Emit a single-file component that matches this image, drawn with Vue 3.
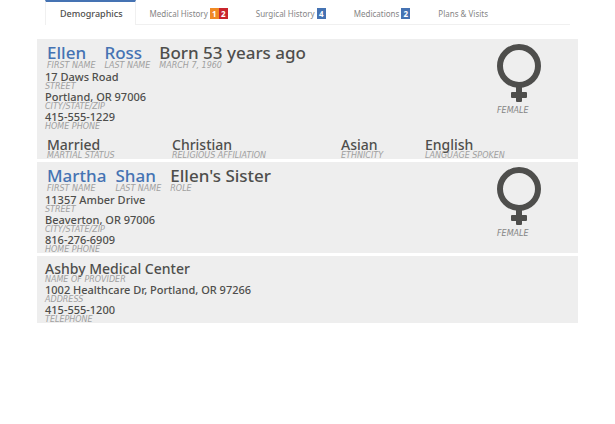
<script setup>
const tabs = [
  { label: 'Demographics', active: true, badges: [] },
  { label: 'Medical History', badges: [{ n: 1, tone: 'orange' }, { n: 2, tone: 'red' }] },
  { label: 'Surgical History', badges: [{ n: 4, tone: 'blue' }] },
  { label: 'Medications', badges: [{ n: 2, tone: 'blue' }] },
  { label: 'Plans & Visits', badges: [] }
]

const people = [
  {
    names: [
      { value: 'Ellen', label: 'First name', blue: true },
      { value: 'Ross', label: 'Last name', blue: true },
      { value: 'Born 53 years ago', label: 'March 7, 1960' }
    ],
    fields: [
      { value: '17 Daws Road', label: 'Street' },
      { value: 'Portland, OR 97006', label: 'City/State/Zip' },
      { value: '415-555-1229', label: 'Home phone' }
    ],
    facts: [
      { value: 'Married', label: 'Martial status' },
      { value: 'Christian', label: 'Religious affiliation' },
      { value: 'Asian', label: 'Ethnicity' },
      { value: 'English', label: 'Language spoken' }
    ]
  },
  {
    names: [
      { value: 'Martha', label: 'First name', blue: true },
      { value: 'Shan', label: 'Last name', blue: true },
      { value: "Ellen's Sister", label: 'Role' }
    ],
    fields: [
      { value: '11357 Amber Drive', label: 'Street' },
      { value: 'Beaverton, OR 97006', label: 'City/State/Zip' },
      { value: '816-276-6909', label: 'Home phone' }
    ],
    facts: []
  }
]

const provider = [
  { value: '1002 Healthcare Dr, Portland, OR 97266', label: 'Address' },
  { value: '415-555-1200', label: 'Telephone' }
]
</script>

<template>
  <div class="page">
    <nav class="tabs">
      <a v-for="t in tabs" :key="t.label" href="#" class="tab" :class="{ active: t.active }">
        <span>{{ t.label }}</span>
        <span v-if="t.badges.length" class="badges">
          <span v-for="b in t.badges" :key="b.n" class="badge" :class="b.tone">{{ b.n }}</span>
        </span>
      </a>
    </nav>

    <main class="panels">
      <section v-for="(p, i) in people" :key="i" class="panel">
        <div class="person">
          <div class="details">
            <div class="names">
              <div v-for="n in p.names" :key="n.label">
                <div class="name" :class="{ blue: n.blue }">{{ n.value }}</div>
                <div class="caption">{{ n.label }}</div>
              </div>
            </div>
            <div v-for="f in p.fields" :key="f.label">
              <div class="value">{{ f.value }}</div>
              <div class="caption">{{ f.label }}</div>
            </div>
          </div>
          <div class="gender">
            <svg class="symbol" viewBox="0 0 44 58" aria-hidden="true">
              <circle cx="22" cy="22" r="19" fill="none" stroke="#4e4e4c" stroke-width="6" />
              <path d="M19 43h6v5h4q1 0 1 1v4q0 1-1 1h-4v3q0 1-1 1h-4q-1 0-1-1v-3h-4q-1 0-1-1v-4q0-1 1-1h4z" fill="#4e4e4c" />
            </svg>
            <div class="caption">Female</div>
          </div>
        </div>
        <div v-if="p.facts.length" class="facts">
          <div v-for="f in p.facts" :key="f.label">
            <div class="fact">{{ f.value }}</div>
            <div class="caption">{{ f.label }}</div>
          </div>
        </div>
      </section>

      <section class="panel">
        <div>
          <div class="fact">Ashby Medical Center</div>
          <div class="caption">Name of provider</div>
        </div>
        <div v-for="f in provider" :key="f.label">
          <div class="value">{{ f.value }}</div>
          <div class="caption">{{ f.label }}</div>
        </div>
      </section>
    </main>
  </div>
</template>

<style>
body {
  background: #fff;
}
</style>

<style scoped>
.page {
  padding: 0 37px;
  font-family: "Noto Sans", "Open Sans", sans-serif;
  color: #4e4e4c;
  white-space: nowrap;
}
.tabs {
  display: flex;
  margin: 0 8px;
  border-bottom: 1px solid #f0f0f0;
}
.tab {
  display: flex;
  align-items: center;
  gap: 2px;
  height: 22px;
  padding: 0 14px;
  border-top: 2px solid transparent;
  font-size: 8px;
  color: #858585;
  text-decoration: none;
}
.tab.active {
  margin-bottom: -1px;
  height: 23px;
  padding-right: 12px;
  border-top-color: #4573b3;
  border-left: 1px solid #f0f0f0;
  border-right: 1px solid #f0f0f0;
  background: #fff;
  font-size: 9px;
  font-weight: 500;
  color: #4e4e4c;
}
.badges {
  display: flex;
}
.badge {
  width: 9px;
  height: 11px;
  font-size: 8px;
  line-height: 11px;
  font-weight: 700;
  text-align: center;
  color: #fff;
}
.orange { background: #f08a24; }
.red { background: #c9252c; }
.badge.blue { background: #4573b3; }
.panels {
  display: flex;
  flex-direction: column;
  gap: 3px;
  margin-top: 14px;
}
.panel {
  padding: 5px 37px 0 8px;
  background: #eee;
}
.person {
  display: flex;
  justify-content: space-between;
}
.names {
  display: flex;
  gap: 9px;
  padding: 0 2px 1px;
}
.name {
  font-size: 17px;
  line-height: 18px;
  font-weight: 500;
}
.name.blue {
  color: #4573b3;
}
.fact {
  font-size: 14px;
  line-height: 15px;
  font-weight: 500;
}
.value {
  font-size: 11px;
  line-height: 13px;
  font-weight: 500;
}
.caption {
  font-family: "DejaVu Sans", sans-serif;
  font-size: 8px;
  line-height: 7px;
  font-style: italic;
  text-transform: uppercase;
  color: #a0a0a0;
}
.gender {
  width: 44px;
}
.symbol {
  display: block;
  width: 44px;
  height: 58px;
  margin-bottom: 5px;
}
.gender .caption {
  color: #858585;
}
.facts {
  display: grid;
  grid-template-columns: 125fr 169fr 84fr 116fr;
  padding: 7px 0 0 2px;
}
</style>
